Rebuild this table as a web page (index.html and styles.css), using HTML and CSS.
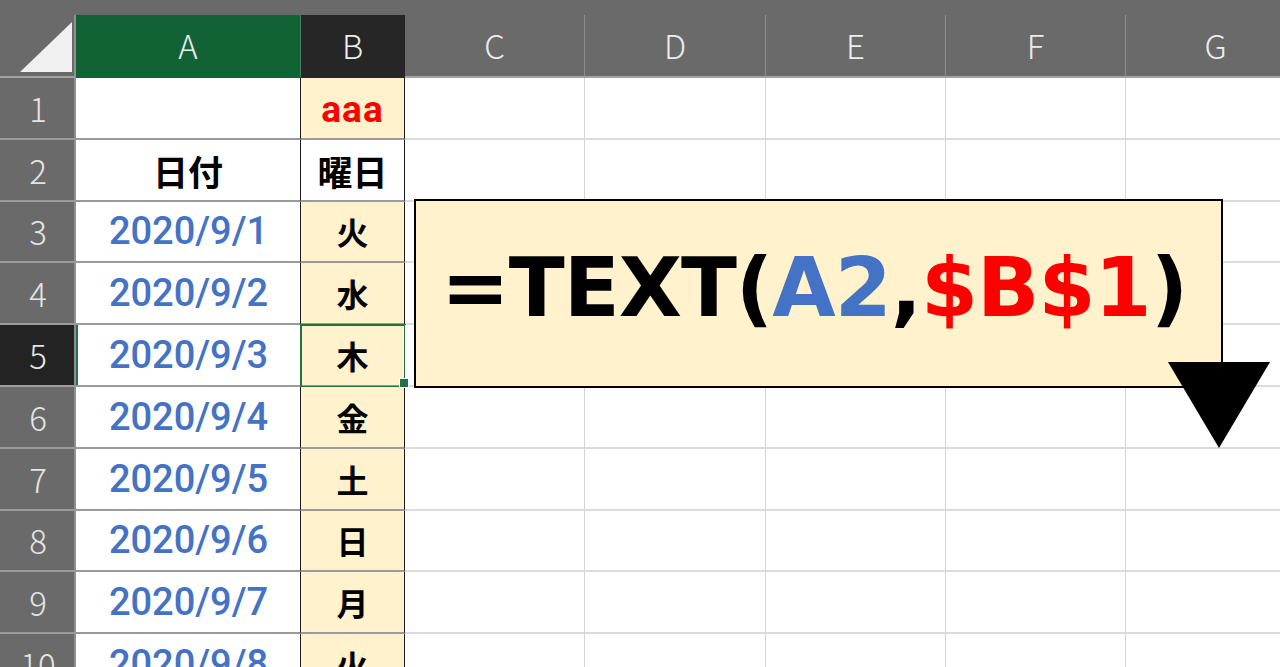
FILE: index.html
```html
<!DOCTYPE html>
<html lang="ja">
<head>
<meta charset="utf-8">
<title>TEXT関数</title>
<link rel="stylesheet" href="styles.css">
</head>
<body>
<div class="sheet">
  <div class="corner"><svg class="corner-tri" width="76" height="63" viewBox="0 0 76 63"><polygon points="20,57 72,7 72,57" fill="#f0f0f0"/></svg></div>
  <div class="colhead col-a">A</div>
  <div class="colhead col-b">B</div>
  <div class="colhead">C</div>
  <div class="colhead">D</div>
  <div class="colhead">E</div>
  <div class="colhead">F</div>
  <div class="colhead">G</div>

  <div class="rowhead">1</div>
  <div class="cell ca"></div>
  <div class="cell cb fill red">aaa</div>
  <div class="cell"></div><div class="cell"></div><div class="cell"></div><div class="cell"></div><div class="cell"></div>

  <div class="rowhead">2</div>
  <div class="cell ca jp">日付</div>
  <div class="cell cb jp">曜日</div>
  <div class="cell"></div><div class="cell"></div><div class="cell"></div><div class="cell"></div><div class="cell"></div>

  <div class="rowhead">3</div>
  <div class="cell ca date">2020/9/1</div>
  <div class="cell cb fill day">火</div>
  <div class="cell"></div><div class="cell"></div><div class="cell"></div><div class="cell"></div><div class="cell"></div>

  <div class="rowhead">4</div>
  <div class="cell ca date">2020/9/2</div>
  <div class="cell cb fill day">水</div>
  <div class="cell"></div><div class="cell"></div><div class="cell"></div><div class="cell"></div><div class="cell"></div>

  <div class="rowhead rowhead-sel">5</div>
  <div class="cell ca date active-row">2020/9/3</div>
  <div class="cell cb fill day selected">木<span class="handle"></span></div>
  <div class="cell"></div><div class="cell"></div><div class="cell"></div><div class="cell"></div><div class="cell"></div>

  <div class="rowhead">6</div>
  <div class="cell ca date">2020/9/4</div>
  <div class="cell cb fill day">金</div>
  <div class="cell"></div><div class="cell"></div><div class="cell"></div><div class="cell"></div><div class="cell"></div>

  <div class="rowhead">7</div>
  <div class="cell ca date">2020/9/5</div>
  <div class="cell cb fill day">土</div>
  <div class="cell"></div><div class="cell"></div><div class="cell"></div><div class="cell"></div><div class="cell"></div>

  <div class="rowhead">8</div>
  <div class="cell ca date">2020/9/6</div>
  <div class="cell cb fill day">日</div>
  <div class="cell"></div><div class="cell"></div><div class="cell"></div><div class="cell"></div><div class="cell"></div>

  <div class="rowhead">9</div>
  <div class="cell ca date">2020/9/7</div>
  <div class="cell cb fill day">月</div>
  <div class="cell"></div><div class="cell"></div><div class="cell"></div><div class="cell"></div><div class="cell"></div>

  <div class="rowhead">10</div>
  <div class="cell ca date">2020/9/8</div>
  <div class="cell cb fill day">火</div>
  <div class="cell"></div><div class="cell"></div><div class="cell"></div><div class="cell"></div><div class="cell"></div>
</div>

<div class="formula">=TEXT(<span class="f-blue">A2</span>,<span class="f-red">$B$1</span>)</div>
<svg class="arrow" width="102" height="86" viewBox="0 0 102 86"><polygon points="0,0 102,0 51,86" fill="#000"/></svg>
</body>
</html>
```

FILE: styles.css
```css
html, body {
  margin: 0;
  padding: 0;
}
body {
  width: 1280px;
  height: 667px;
  overflow: hidden;
  background: #ffffff;
  font-family: "Noto Sans CJK JP", sans-serif;
  position: relative;
}

.sheet {
  display: grid;
  grid-template-columns: 76px 225px 104px 180px 181px 180px 180px 180px;
  grid-template-rows: 63px repeat(10, 61.8px);
  padding-top: 15px;
  background: #6a6a6a;
  width: 1306px;
}

.corner {
  background: #6a6a6a;
  border-right: 2px solid #8f8f8f;
  border-bottom: 2px solid #a3a3a3;
  box-sizing: border-box;
  overflow: hidden;
}
.corner-tri {
  display: block;
}

.colhead {
  display: flex;
  align-items: center;
  justify-content: center;
  color: #ececec;
  font-family: "Noto Sans CJK JP", sans-serif;
  font-weight: 300;
  font-size: 33px;
  background: #6a6a6a;
  border-right: 1px solid #8e8e8e;
  border-bottom: 2px solid #a3a3a3;
  box-sizing: border-box;
  padding-bottom: 2px;
}
.col-a {
  background: #116235;
  border-right: 1px solid #4b7c5e;
  border-bottom-color: #116235;
}
.col-b {
  background: #262626;
  border-right: 1px solid #262626;
  border-bottom-color: #262626;
}

.rowhead {
  display: flex;
  align-items: center;
  justify-content: center;
  color: #e4e4e4;
  font-family: "Noto Sans CJK JP", sans-serif;
  font-weight: 300;
  font-size: 33px;
  background: #6a6a6a;
  border-right: 2px solid #8f8f8f;
  border-bottom: 2px solid #9c9c9c;
  box-sizing: border-box;
  padding-left: 2px;
}
.rowhead-sel {
  background: #232323;
}

.cell {
  display: flex;
  align-items: center;
  justify-content: center;
  background: #ffffff;
  border-right: 1px solid #d4d4d4;
  border-bottom: 2px solid #dcdcdc;
  box-sizing: border-box;
  position: relative;
}
.ca {
  border-right: 1px solid #1a1a1a;
  border-bottom: 2px solid #9a9a9a;
}
.cb {
  border-right: 1px solid #1a1a1a;
  border-bottom: 2px solid #9a9a9a;
}
.fill {
  background: #fff2cc;
}

.red {
  color: #ff0000;
  font-family: Roboto, "Liberation Sans", sans-serif;
  font-weight: 700;
  font-size: 37px;
  letter-spacing: 1px;
  padding-top: 4px;
}
.jp {
  color: #000;
  font-family: "Noto Sans CJK JP", sans-serif;
  font-weight: 700;
  font-size: 35px;
  padding-top: 2px;
}
.day {
  color: #000;
  font-family: "Noto Sans CJK JP", sans-serif;
  font-weight: 700;
  font-size: 32px;
}
.date {
  color: #4472c4;
  font-family: Roboto, "Liberation Sans", sans-serif;
  font-weight: 500;
  font-size: 38px;
  padding-left: 1px;
}

.active-row {
  box-shadow: inset 2px 0 0 #217346;
}
.selected {
  outline: 2px solid #217346;
  outline-offset: -1px;
}
.handle {
  position: absolute;
  right: -5px;
  bottom: -3px;
  width: 8px;
  height: 8px;
  background: #217346;
  border: 1px solid #ffffff;
  z-index: 2;
}

.formula {
  position: absolute;
  left: 414px;
  top: 199px;
  width: 809px;
  height: 189px;
  box-sizing: border-box;
  background: #fff2cc;
  border: 2px solid #000;
  padding: 46px 0 0 25px;
  font-family: "DejaVu Sans", sans-serif;
  font-weight: 700;
  font-size: 82px;
  line-height: 1;
  color: #000;
  white-space: nowrap;
  letter-spacing: -1px;
}
.f-blue {
  color: #4472c4;
}
.f-red {
  color: #ff0000;
}

.arrow {
  position: absolute;
  left: 1168px;
  top: 362px;
  display: block;
}
```
